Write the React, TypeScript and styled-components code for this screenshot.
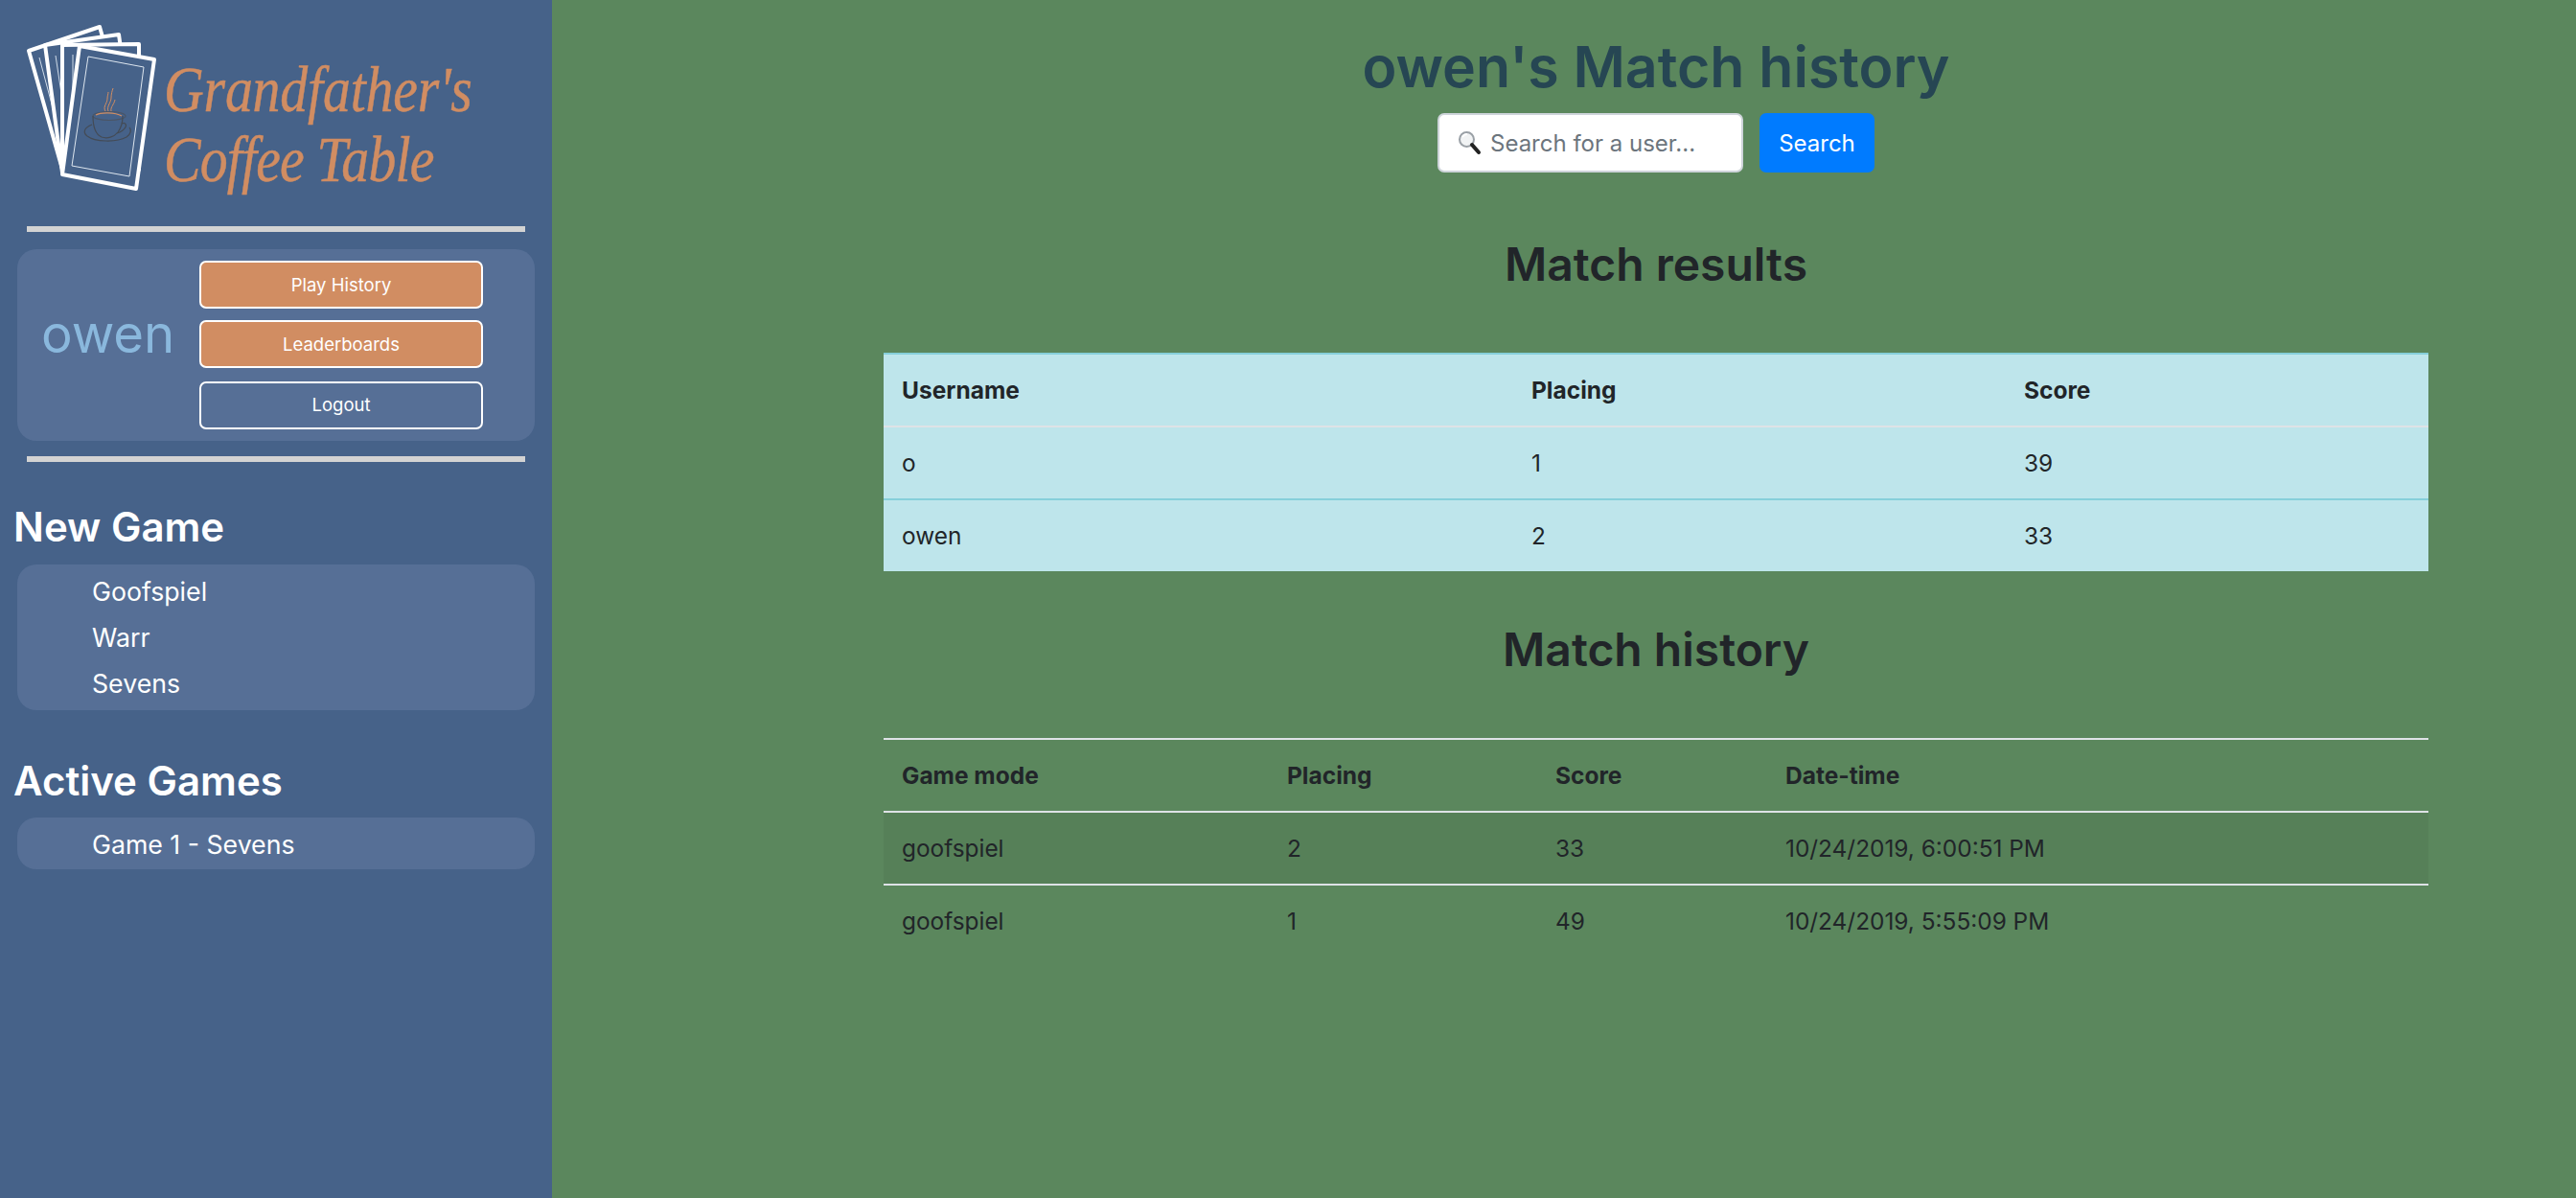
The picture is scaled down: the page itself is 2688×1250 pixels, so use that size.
import React from 'react';
import styled, { createGlobalStyle } from 'styled-components';

const GlobalStyle = createGlobalStyle`
  html, body {
    margin: 0;
    padding: 0;
    height: 100%;
    background: #5b875d;
    font-family: Inter, "Liberation Sans", sans-serif;
  }
  * {
    box-sizing: border-box;
  }
`;

const CardsLogo = () => (
  <CardsSvg viewBox="0 0 160 190">
    <g fill="#466289" stroke="#fff" strokeWidth="4" strokeLinejoin="round">
      <polygon points="10,33 84,8 120,135 46,160" />
      <polyline points="21,40 45,130" fill="none" stroke="#cfdbe8" strokeWidth="1" />
      <polygon points="27,27 104,16 122,148 45,160" />
      <polyline points="38,38 52,130" fill="none" stroke="#cfdbe8" strokeWidth="1" />
      <polygon points="45,27 125,26 125,157 45,158" />
      <polyline points="56,37 56,130" fill="none" stroke="#cfdbe8" strokeWidth="1" />
      <polygon points="63,28 141,42 122,177 45,162" />
      <polygon points="72,39 130,50 115,164 55,153" stroke="#dde6ef" strokeWidth="1" />
    </g>
    <g fill="none">
      <path d="M90 96c-3-5 2-8 2-13 0-3 1-5 1-7" stroke="#d18d62" strokeWidth="1" />
      <path d="M93 96c-2-5 3-9 3-14 0-4 1-7 2-10" stroke="#d18d62" strokeWidth="1" />
      <path d="M96 96c-1-4 3-7 4-12" stroke="#d18d62" strokeWidth="1" />
      <ellipse cx="94" cy="101" rx="17" ry="4.5" stroke="#4a5566" strokeWidth="1.2" />
      <path d="M80 100c5-3 20-3 27 1" stroke="#d18d62" strokeWidth="1.2" />
      <path d="M77 101c0 10 2 19 9 22 6 2 13 0 17-5 3-4 5-10 5-17" stroke="#444b55" strokeWidth="1.2" />
      <path d="M107 109c4-2 6 2 3 5-2 3-5 4-8 5" stroke="#444b55" strokeWidth="1.2" />
      <path d="M76 110c-8 3-10 8-5 12 8 6 30 7 41 1 5-3 5-8 3-10" stroke="#444b55" strokeWidth="1.2" />
    </g>
  </CardsSvg>
);

const SearchGlass = () => (
  <GlassSvg viewBox="0 0 24 26">
    <circle cx="9.5" cy="9.5" r="7.5" fill="#f1f3f4" stroke="#9aa0a6" strokeWidth="2" />
    <path d="M5 7c1-2 3-3 5-3" stroke="#fff" strokeWidth="2" fill="none" />
    <path d="M15 15l7 8" stroke="#222" strokeWidth="4" strokeLinecap="round" />
  </GlassSvg>
);

const App = () => {
  return (
    <>
      <GlobalStyle />
      <Page>
        <Sidebar>
          <LogoRow>
            <CardsLogo />
            <LogoText>
              <LogoLine>Grandfather's</LogoLine>
              <LogoLine $tight>Coffee Table</LogoLine>
            </LogoText>
          </LogoRow>
          <Divider />
          <UserPanel>
            <UserName>owen</UserName>
            <ButtonStack>
              <SideButton $filled>Play History</SideButton>
              <SideButton $filled>Leaderboards</SideButton>
              <SideButton $apart>Logout</SideButton>
            </ButtonStack>
          </UserPanel>
          <Divider />
          <SideHeading>New Game</SideHeading>
          <GameList>
            <GameItem>Goofspiel</GameItem>
            <GameItem>Warr</GameItem>
            <GameItem>Sevens</GameItem>
          </GameList>
          <SideHeading $spaced>Active Games</SideHeading>
          <GameList $compact>
            <GameItem>Game 1 - Sevens</GameItem>
          </GameList>
        </Sidebar>
        <Main>
          <Title>owen's Match history</Title>
          <SearchForm>
            <SearchField>
              <SearchGlass />
              <SearchInput placeholder="Search for a user..." />
            </SearchField>
            <SearchButton>Search</SearchButton>
          </SearchForm>
          <SectionTitle>Match results</SectionTitle>
          <ResultsTable>
            <thead>
              <tr>
                <Th $width={657}>Username</Th>
                <Th $width={514}>Placing</Th>
                <Th $width={441}>Score</Th>
              </tr>
            </thead>
            <tbody>
              <tr>
                <Td>o</Td>
                <Td>1</Td>
                <Td>39</Td>
              </tr>
              <tr>
                <Td>owen</Td>
                <Td>2</Td>
                <Td>33</Td>
              </tr>
            </tbody>
          </ResultsTable>
          <SectionTitle $second>Match history</SectionTitle>
          <HistoryTable>
            <thead>
              <tr>
                <Th $width={402}>Game mode</Th>
                <Th $width={280}>Placing</Th>
                <Th $width={240}>Score</Th>
                <Th $width={690}>Date-time</Th>
              </tr>
            </thead>
            <tbody>
              <StripedRow>
                <Td>goofspiel</Td>
                <Td>2</Td>
                <Td>33</Td>
                <Td>10/24/2019, 6:00:51 PM</Td>
              </StripedRow>
              <tr>
                <Td>goofspiel</Td>
                <Td>1</Td>
                <Td>49</Td>
                <Td>10/24/2019, 5:55:09 PM</Td>
              </tr>
            </tbody>
          </HistoryTable>
        </Main>
      </Page>
    </>
  );
};

export default App;

const Page = styled.div`
  display: flex;
  min-height: 100vh;
`;

const Sidebar = styled.aside`
  width: 576px;
  flex-shrink: 0;
  background: #466289;
  color: #fff;
  padding: 18px 0 0 18px;
`;

const LogoRow = styled.div`
  display: flex;
  height: 218px;
  align-items: flex-start;
`;

const CardsSvg = styled.svg`
  width: 160px;
  height: 190px;
  margin: 2px 0 0 2px;
  flex-shrink: 0;
`;

const LogoText = styled.div`
  margin: 39px 0 0 -9px;
  color: #d18d62;
  font-family: "Liberation Serif", serif;
  font-style: italic;
  font-size: 68px;
  line-height: 73px;
  -webkit-text-stroke: 0.5px #d18d62;
  transform: scaleX(0.85);
  transform-origin: left top;
`;

const LogoLine = styled.div<{ $tight?: boolean }>`
  white-space: nowrap;
  letter-spacing: ${({ $tight }) => ($tight ? '-1px' : '-0.2px')};
`;

const Divider = styled.div`
  width: 520px;
  height: 6px;
  margin-left: 10px;
  background: #d3d3d3;
`;

const UserPanel = styled.div`
  width: 540px;
  height: 200px;
  margin: 18px 0 16px;
  padding: 12px 0 0 25px;
  display: flex;
  background: #566f96;
  border-radius: 20px;
`;

const UserName = styled.div`
  width: 165px;
  margin-top: 36px;
  color: #8ab8dd;
  font-size: 54.5px;
  line-height: 80px;
`;

const ButtonStack = styled.div`
  display: flex;
  flex-direction: column;
  gap: 12px;
`;

const SideButton = styled.div<{ $filled?: boolean; $apart?: boolean }>`
  width: 296px;
  height: 50px;
  display: flex;
  align-items: center;
  justify-content: center;
  margin-top: ${({ $apart }) => ($apart ? '2px' : '0')};
  padding-bottom: ${({ $apart }) => ($apart ? '2px' : '0')};
  border: 2px solid #fff;
  border-radius: 7px;
  background: ${({ $filled }) => ($filled ? '#d18d62' : 'transparent')};
  font-size: 18.5px;
`;

const SideHeading = styled.h2<{ $spaced?: boolean }>`
  margin: ${({ $spaced }) => ($spaced ? '49px' : '43px')} 0 ${({ $spaced }) => ($spaced ? '13px' : '14px')} -4px;
  font-size: 42px;
  font-weight: 600;
  line-height: 50px;
`;

const GameList = styled.div<{ $compact?: boolean }>`
  width: 540px;
  padding: 4px 0 ${({ $compact }) => ($compact ? '2px' : '4px')} 78px;
  background: #566f96;
  border-radius: 20px;
`;

const GameItem = styled.div`
  font-size: 26.7px;
  line-height: 48px;
`;

const Main = styled.main`
  flex: 1;
  padding: 30px 0 0 192px;
  display: flex;
  flex-direction: column;
  align-items: center;
`;

const Title = styled.h1`
  margin: 0;
  color: #264653;
  font-size: 59px;
  font-weight: 600;
  line-height: 80px;
`;

const SearchForm = styled.div`
  display: flex;
  gap: 17px;
  margin-top: 8px;
`;

const SearchField = styled.div`
  position: relative;
  width: 319px;
  height: 62px;
`;

const GlassSvg = styled.svg`
  position: absolute;
  left: 20px;
  top: 18px;
  width: 26px;
  height: 26px;
`;

const SearchInput = styled.input`
  width: 100%;
  height: 100%;
  padding: 0 16px 0 53px;
  border: 2px solid #ced4da;
  border-radius: 7px;
  background: #fff;
  font-family: inherit;
  font-size: 24px;
  outline: none;

  &::placeholder {
    color: #6c757d;
    opacity: 1;
  }
`;

const SearchButton = styled.button`
  width: 120px;
  height: 62px;
  border: none;
  border-radius: 7px;
  background: #007bff;
  color: #fff;
  font-family: inherit;
  font-size: 24px;
`;

const SectionTitle = styled.h2<{ $second?: boolean }>`
  margin: ${({ $second }) => ($second ? '52px 0 62px' : '66px 0 62px')};
  color: #212529;
  font-size: 48px;
  font-weight: 600;
  line-height: 60px;
`;

const ResultsTable = styled.table`
  width: 1612px;
  table-layout: fixed;
  border-collapse: separate;
  border-spacing: 0;
  background: #bee5eb;
  color: #212529;

  th {
    border-top-color: #86cfda;
  }

  td {
    border-top-color: #86cfda;
  }

  tbody tr:first-child td {
    border-top-color: #dee2e6;
  }
`;

const HistoryTable = styled.table`
  width: 1612px;
  table-layout: fixed;
  border-collapse: separate;
  border-spacing: 0;
  color: #212529;
`;

const StripedRow = styled.tr`
  background: rgba(0, 0, 0, 0.05);
`;

const Th = styled.th<{ $width: number }>`
  width: ${({ $width }) => $width}px;
  height: 76px;
  padding: 0 19px;
  border-top: 2px solid #dee2e6;
  text-align: left;
  font-size: 24.5px;
  font-weight: 700;
`;

const Td = styled.td`
  height: 76px;
  padding: 0 19px;
  border-top: 2px solid #dee2e6;
  font-size: 24.4px;
`;
